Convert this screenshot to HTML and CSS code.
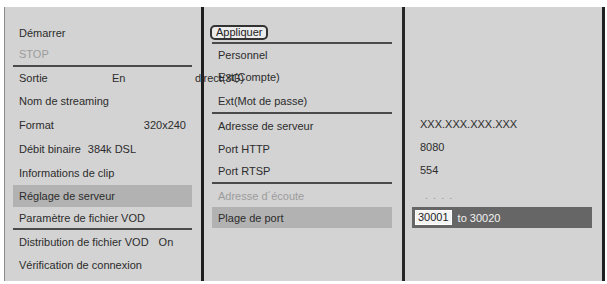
FILE: index.html
```html
<!DOCTYPE html>
<html lang="fr">
<head>
<meta charset="utf-8">
<title>Réglage de serveur</title>
<link rel="stylesheet" href="styles.css">
</head>
<body>
<div class="panel">
  <div class="col col1">
    <div class="row">Démarrer</div>
    <div class="row dis">STOP</div>
    <div class="sep sep-end"></div>
    <div class="row"><span class="w-sortie">Sortie</span><span class="w-en">En</span><span>direct(3G)</span></div>
    <div class="row">Nom de streaming</div>
    <div class="row spread"><span>Format</span><span>320x240</span></div>
    <div class="row"><span>Débit binaire</span><span class="gap7">384k DSL</span></div>
    <div class="row">Informations de clip</div>
    <div class="row hl">Réglage de serveur</div>
    <div class="row">Paramètre de fichier VOD</div>
    <div class="sep"></div>
    <div class="row"><span>Distribution de fichier VOD</span><span class="gap10">On</span></div>
    <div class="row">Vérification de connexion</div>
  </div>
  <div class="col col2">
    <div class="row btn-row"><span class="btn">Appliquer</span></div>
    <div class="sep"></div>
    <div class="row">Personnel</div>
    <div class="row">Ext(Compte)</div>
    <div class="row">Ext(Mot de passe)</div>
    <div class="sep"></div>
    <div class="row">Adresse de serveur</div>
    <div class="row">Port HTTP</div>
    <div class="row">Port RTSP</div>
    <div class="sep"></div>
    <div class="row dis">Adresse d´écoute</div>
    <div class="row hl">Plage de port</div>
  </div>
  <div class="col col3">
    <div class="row">XXX.XXX.XXX.XXX</div>
    <div class="row">8080</div>
    <div class="row">554</div>
    <div class="row dis dots">. . . .</div>
    <div class="row hl-dark"><span class="field">30001</span><span class="gap6">to 30020</span></div>
  </div>
</div>
</body>
</html>
```

FILE: styles.css
```css
html, body {
  margin: 0;
  padding: 0;
  background: #ffffff;
}

body {
  font-family: "Liberation Sans", Arial, sans-serif;
  font-size: 11px;
  color: #2c2c2c;
}

.panel {
  margin: 7px 2px 0 4px;
  height: 274px;
  display: flex;
  background: #d3d3d3;
  border-left: 1px solid #8a8a8a;
  border-right: 3px solid #202020;
  box-sizing: border-box;
}

.col {
  box-sizing: border-box;
  display: grid;
  align-content: start;
  padding-top: 15px;
}

.col1 {
  width: 199px;
  border-right: 3px solid #1e1e1e;
  padding-left: 8px;
  padding-right: 9px;
  grid-template-rows: 21px 21px 3px 22px 24px 24px 23px 25px 22px 21px 2px 23px 23px;
}

.col2 {
  width: 201px;
  border-right: 3px solid #262626;
  padding-left: 8px;
  padding-right: 10px;
  grid-template-rows: 20px 2px 21px 24px 23px 2px 23px 23px 22px 2px 23px 21px;
}

.col3 {
  flex: 1;
  padding-left: 7px;
  padding-right: 10px;
  padding-top: 106px;
  grid-template-rows: 22px 23px 24px 25px 21px;
}

.row {
  display: flex;
  align-items: center;
  padding-left: 6px;
  padding-right: 6px;
  white-space: nowrap;
  min-width: 0;
}

.col3 .row {
  padding-left: 8px;
}

.dis {
  color: #9c9c9c;
}

.sep {
  height: 2px;
  background: #4a4a4a;
}

.sep-end {
  align-self: end;
}

.w-sortie {
  width: 93px;
  flex: none;
}

.w-en {
  width: 83px;
  flex: none;
}

.spread {
  justify-content: space-between;
}

.gap7 {
  margin-left: 7px;
}

.gap10 {
  margin-left: 10px;
}

.gap6 {
  margin-left: 6px;
}

.hl {
  background: #b2b2b2;
}

.btn-row {
  padding-left: 0;
  margin-left: -2px;
}

.btn {
  display: inline-block;
  height: 11px;
  line-height: 11px;
  padding: 0 4px;
  border: 2px solid #333333;
  border-radius: 5px;
  background: #ececec;
  color: #222222;
}

.col3 .dots {
  padding-left: 13px;
  letter-spacing: 1px;
}

.col3 .hl-dark {
  background: #666666;
  color: #f2f2f2;
  padding-left: 3px;
}

.field {
  display: inline-block;
  background: #f4f4f4;
  color: #1e1e1e;
  padding: 0 2px;
  height: 13px;
  line-height: 13px;
  border: 1px solid #ffffff;
}
```
